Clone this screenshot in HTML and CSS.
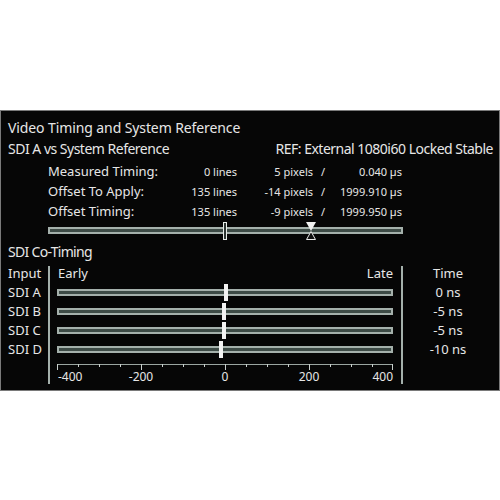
FILE: index.html
```html
<!DOCTYPE html>
<html>
<head>
<meta charset="utf-8">
<link rel="stylesheet" href="styles.css">
</head>
<body>
<div class="panel">
  <div class="title">Video Timing and System Reference</div>
  <div class="subhead"><span>SDI A vs System Reference</span><span>REF: External 1080i60 Locked Stable</span></div>
  <div class="measure">
    <div class="mrow"><span class="mlabel">Measured Timing:</span><span class="num">0 lines</span><span class="num">5 pixels</span><span class="slash">/</span><span class="num">0.040 µs</span></div>
    <div class="mrow"><span class="mlabel">Offset To Apply:</span><span class="num">135 lines</span><span class="num">-14 pixels</span><span class="slash">/</span><span class="num">1999.910 µs</span></div>
    <div class="mrow"><span class="mlabel">Offset Timing:</span><span class="num">135 lines</span><span class="num">-9 pixels</span><span class="slash">/</span><span class="num">1999.950 µs</span></div>
  </div>
  <svg class="slider" width="356" height="20" viewBox="0 0 356 20">
    <rect x="1" y="7" width="353" height="5" fill="#3d4b46" stroke="#a4b0ab" stroke-width="2"/>
    <rect x="175.5" y="1.5" width="3" height="17" fill="#2c3532" stroke="#e8ece9" stroke-width="1"/>
    <polygon points="258,1 268,1 263,10" fill="#f0f0f0"/>
    <polygon points="263,10.5 258.5,18.5 267.5,18.5" fill="#101010" stroke="#e8e8e8" stroke-width="1"/>
  </svg>
  <div class="section">SDI Co-Timing</div>
  <div class="cotiming">
    <div class="vline v1"></div>
    <div class="vline v2"></div>
    <div class="clabel r1">Input</div>
    <div class="chead r1"><span>Early</span><span>Late</span></div>
    <div class="ctime r1">Time</div>

    <div class="clabel r2">SDI A</div>
    <div class="track r2"><div class="bar"><div class="marker" style="left:164.5px"></div></div></div>
    <div class="ctime r2">0 ns</div>

    <div class="clabel r3">SDI B</div>
    <div class="track r3"><div class="bar"><div class="marker" style="left:162.5px"></div></div></div>
    <div class="ctime r3">-5 ns</div>

    <div class="clabel r4">SDI C</div>
    <div class="track r4"><div class="bar"><div class="marker" style="left:162.5px"></div></div></div>
    <div class="ctime r4">-5 ns</div>

    <div class="clabel r5">SDI D</div>
    <div class="track r5"><div class="bar"><div class="marker" style="left:160px"></div></div></div>
    <div class="ctime r5">-10 ns</div>

    <svg class="axis" width="351" height="26" viewBox="0 0 351 26">
      <line x1="7" y1="5.5" x2="343" y2="5.5" stroke="#9aa5a0" stroke-width="1"/>
      <g stroke="#c8cfcc" stroke-width="1">
        <line x1="7.5" y1="5" x2="7.5" y2="11"/>
        <line x1="28.5" y1="5" x2="28.5" y2="8"/>
        <line x1="49.5" y1="5" x2="49.5" y2="8"/>
        <line x1="70.5" y1="5" x2="70.5" y2="8"/>
        <line x1="91.5" y1="5" x2="91.5" y2="11"/>
        <line x1="112.5" y1="5" x2="112.5" y2="8"/>
        <line x1="133.5" y1="5" x2="133.5" y2="8"/>
        <line x1="154.5" y1="5" x2="154.5" y2="8"/>
        <line x1="175.5" y1="5" x2="175.5" y2="11"/>
        <line x1="196.5" y1="5" x2="196.5" y2="8"/>
        <line x1="217.5" y1="5" x2="217.5" y2="8"/>
        <line x1="238.5" y1="5" x2="238.5" y2="8"/>
        <line x1="259.5" y1="5" x2="259.5" y2="11"/>
        <line x1="280.5" y1="5" x2="280.5" y2="8"/>
        <line x1="301.5" y1="5" x2="301.5" y2="8"/>
        <line x1="322.5" y1="5" x2="322.5" y2="8"/>
        <line x1="342.5" y1="5" x2="342.5" y2="11"/>
      </g>
      <g class="axlabels">
        <text x="8" y="21.7" text-anchor="start">-400</text>
        <text x="91" y="21.7" text-anchor="middle">-200</text>
        <text x="175" y="21.7" text-anchor="middle">0</text>
        <text x="259" y="21.7" text-anchor="middle">200</text>
        <text x="343" y="21.7" text-anchor="end">400</text>
      </g>
    </svg>
  </div>
</div>
</body>
</html>
```
FILE: styles.css
```css
html, body {
  margin: 0;
  padding: 0;
  background: #ffffff;
}

body {
  padding-top: 110px;
}

.panel {
  box-sizing: border-box;
  width: 500px;
  height: 281px;
  background: #060606;
  border: 1px solid #7a7a7a;
  padding: 6px 6px 0 7px;
  color: #e6e6e6;
  font-family: "Noto Sans", "Open Sans", sans-serif;
  overflow: hidden;
}

.title {
  font-size: 14px;
  letter-spacing: -0.1px;
  line-height: 21px;
  white-space: nowrap;
}

.subhead {
  display: flex;
  justify-content: space-between;
  font-size: 14px;
  letter-spacing: -0.5px;
  line-height: 21px;
  white-space: nowrap;
}

.section {
  font-size: 14px;
  letter-spacing: -0.7px;
  line-height: 21px;
  white-space: nowrap;
}

.measure {
  margin: 2px 0 0 40px;
}

.mrow {
  display: grid;
  grid-template-columns: 120px 69px 76px 20px 69px;
  align-items: baseline;
  height: 20px;
  line-height: 20px;
  white-space: nowrap;
}

.mlabel {
  font-size: 13px;
}

.num {
  font-size: 11px;
  text-align: right;
}

.slash {
  font-size: 11px;
  text-align: center;
}

.slider {
  display: block;
  margin-left: 40px;
}

.cotiming {
  display: grid;
  grid-template-columns: 40px 2px 351px 2px 1fr;
  grid-template-rows: repeat(5, 19px) 26px;
  margin-top: 2px;
  font-size: 13px;
  line-height: 19px;
  white-space: nowrap;
}

.vline {
  grid-row: 1 / 7;
  background: #a4b0ab;
  margin: 2px 0 1px 0;
}

.v1 { grid-column: 2; }
.v2 { grid-column: 4; }

.r1 { grid-row: 1; }
.r2 { grid-row: 2; }
.r3 { grid-row: 3; }
.r4 { grid-row: 4; }
.r5 { grid-row: 5; }

.clabel {
  grid-column: 1;
}

.chead {
  grid-column: 3;
  display: flex;
  justify-content: space-between;
  padding: 0 8px;
}

.ctime {
  grid-column: 5;
  text-align: center;
}

.track {
  grid-column: 3;
  display: flex;
  align-items: center;
  padding: 0 8px 0 7px;
}

.bar {
  position: relative;
  box-sizing: border-box;
  width: 100%;
  height: 7px;
  border: 2px solid #a4b0ab;
  background: #3d4b46;
}

.marker {
  position: absolute;
  top: -7px;
  width: 4px;
  height: 17px;
  background: #f2f2f2;
}

.axis {
  grid-column: 3;
  grid-row: 6;
  display: block;
}

.axlabels {
  font-family: "Noto Sans", "Open Sans", sans-serif;
  font-size: 12px;
  fill: #e6e6e6;
}
```
